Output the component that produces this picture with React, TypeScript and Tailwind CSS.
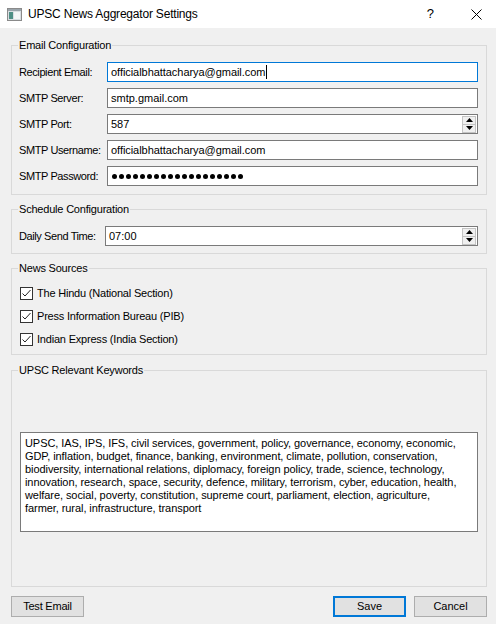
import React from "react";

const keywordLines = [
  "UPSC, IAS, IPS, IFS, civil services, government, policy, governance, economy, economic,",
  "GDP, inflation, budget, finance, banking, environment, climate, pollution, conservation,",
  "biodiversity, international relations, diplomacy, foreign policy, trade, science, technology,",
  "innovation, research, space, security, defence, military, terrorism, cyber, education, health,",
  "welfare, social, poverty, constitution, supreme court, parliament, election, agriculture,",
  "farmer, rural, infrastructure, transport",
];

const sources = [
  "The Hindu (National Section)",
  "Press Information Bureau (PIB)",
  "Indian Express (India Section)",
];

const SpinButtons: React.FC = () => (
  <div className="ml-auto mr-[1px] flex h-[17px] w-[14px] flex-col border border-[#c4c4c4] bg-[#f0f0f0]">
    <div className="flex flex-1 items-center justify-center border-b border-[#c4c4c4]">
      <svg width="7" height="4" viewBox="0 0 7 4">
        <polygon points="3.5,0 7,4 0,4" fill="#000" />
      </svg>
    </div>
    <div className="flex flex-1 items-center justify-center">
      <svg width="7" height="4" viewBox="0 0 7 4">
        <polygon points="0,0 7,0 3.5,4" fill="#000" />
      </svg>
    </div>
  </div>
);

const Field: React.FC<{
  label: string;
  labelWidth: string;
  focused?: boolean;
  children: React.ReactNode;
}> = ({ label, labelWidth, focused, children }) => (
  <div className="flex h-[20px] items-center">
    <div className={`${labelWidth} shrink-0 tracking-[-0.4px]`}>{label}</div>
    <div
      className={`flex h-[20px] flex-1 items-center bg-white pl-[3px] border ${
        focused ? "border-[#0078d7]" : "border-[#7a7a7a]"
      }`}
    >
      {children}
    </div>
  </div>
);

const Group: React.FC<{ title: string; className: string; children: React.ReactNode }> = ({
  title,
  className,
  children,
}) => (
  <fieldset className={`border border-[#d9d9d9] ${className}`}>
    <legend className="ml-[6px] px-[1px] leading-[13px] tracking-[-0.2px]">{title}</legend>
    {children}
  </fieldset>
);

const Checkbox: React.FC<{ label: string }> = ({ label }) => (
  <div className="flex h-[17px] items-center">
    <div className="flex h-[13px] w-[13px] items-center justify-center border border-[#333] bg-white">
      <svg width="11" height="11" viewBox="0 0 11 11">
        <polyline points="1.5,5.5 4,8 9.5,2" fill="none" stroke="#222" strokeWidth="1" />
      </svg>
    </div>
    <span className="ml-[4px] tracking-[-0.2px]">{label}</span>
  </div>
);

const App: React.FC = () => {
  return (
    <div className="flex h-[624px] w-[496px] flex-col overflow-hidden bg-[#f0f0f0] font-['Liberation_Sans',Arial,sans-serif] text-[11px] leading-[13px] text-black">
      {/* title bar */}
      <div className="flex h-[28px] shrink-0 items-center bg-white">
        <svg className="ml-[7px]" width="15" height="13" viewBox="0 0 15 13">
          <rect x="0.5" y="0.5" width="14" height="12" fill="#d9dee2" stroke="#8a8a8a" />
          <rect x="1" y="1" width="13" height="2" fill="#9aa4ab" />
          <rect x="2" y="4" width="4" height="7" fill="#4f8f86" />
          <rect x="7" y="4" width="6" height="7" fill="#f4f6f7" />
        </svg>
        <span className="ml-[6px] text-[12px] leading-[16px] tracking-[-0.2px]">UPSC News Aggregator Settings</span>
        <span className="ml-auto text-[13px] leading-[16px]">?</span>
        <svg className="ml-[37px] mr-[14px]" width="11" height="11" viewBox="0 0 11 11">
          <path d="M0.5 0.5 L10.5 10.5 M10.5 0.5 L0.5 10.5" stroke="#000" strokeWidth="1" />
        </svg>
      </div>

      <div className="flex flex-1 flex-col pl-[11px] pr-[9px] pt-[11px]">
        <Group title="Email Configuration" className="h-[156px]">
          <div className="flex flex-col gap-[6px] pl-[7px] pr-[8px] pt-[10px]">
            <Field label="Recipient Email:" labelWidth="w-[88px]" focused>
              <span className="tracking-[-0.05px]">officialbhattacharya@gmail.com</span>
              <span className="ml-[1px] h-[14px] w-[1px] bg-black" />
            </Field>
            <Field label="SMTP Server:" labelWidth="w-[88px]">
              smtp.gmail.com
            </Field>
            <Field label="SMTP Port:" labelWidth="w-[88px]">
              <span>587</span>
              <SpinButtons />
            </Field>
            <Field label="SMTP Username:" labelWidth="w-[88px]">
              <span className="tracking-[-0.05px]">officialbhattacharya@gmail.com</span>
            </Field>
            <Field label="SMTP Password:" labelWidth="w-[88px]">
              <div className="flex gap-[2px] pl-[1px]">
                {Array.from({ length: 19 }).map((_, i) => (
                  <span key={i} className="h-[5px] w-[5px] rounded-full bg-black" />
                ))}
              </div>
            </Field>
          </div>
        </Group>

        <Group title="Schedule Configuration" className="mt-[8px] h-[51px]">
          <div className="pl-[7px] pr-[8px] pt-[10px]">
            <Field label="Daily Send Time:" labelWidth="w-[86px]">
              <span>07:00</span>
              <SpinButtons />
            </Field>
          </div>
        </Group>

        <Group title="News Sources" className="mt-[8px] h-[93px]">
          <div className="flex flex-col gap-[6px] pl-[8px] pt-[10px]">
            {sources.map((s) => (
              <Checkbox key={s} label={s} />
            ))}
          </div>
        </Group>

        <Group title="UPSC Relevant Keywords" className="mt-[9px] h-[223px]">
          <div className="pl-[8px] pr-[8px] pt-[55px]">
            <div className="h-[100px] border border-[#7a7a7a] bg-white pl-[4px] pt-[4px] whitespace-nowrap tracking-[-0.07px]">
              {keywordLines.map((l) => (
                <div key={l}>{l}</div>
              ))}
            </div>
          </div>
        </Group>

        <div className="mt-[9px] flex h-[21px]">
          <button className="h-[21px] w-[73px] border border-[#adadad] bg-[#e1e1e1] tracking-[-0.2px]">Test Email</button>
          <button className="ml-auto h-[21px] w-[73px] border-2 border-[#0078d7] bg-[#e1e1e1]">Save</button>
          <button className="ml-[8px] h-[21px] w-[73px] border border-[#adadad] bg-[#e1e1e1]">Cancel</button>
        </div>
      </div>
    </div>
  );
};

export default App;
